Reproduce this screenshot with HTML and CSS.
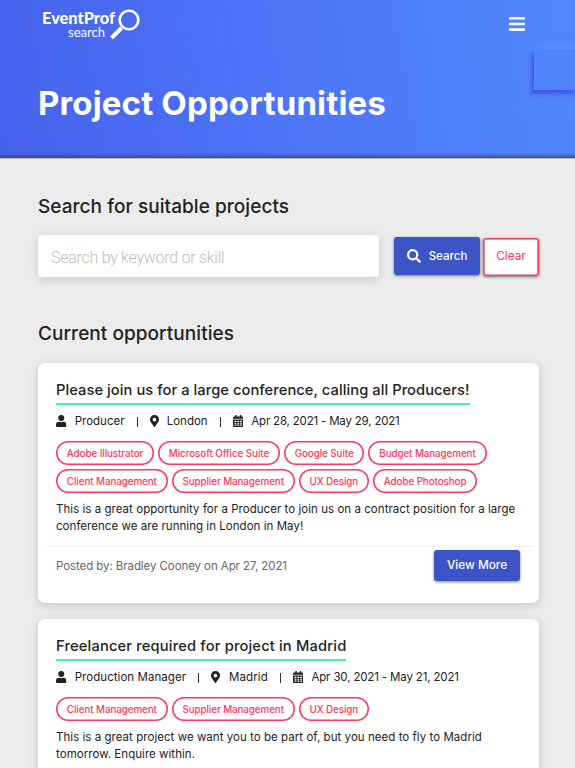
FILE: index.html
```html
<!DOCTYPE html>
<html lang="en">
<head>
<meta charset="utf-8">
<title>Project Opportunities</title>
<link rel="stylesheet" href="styles.css">
</head>
<body>
<svg class="defs" aria-hidden="true">
  <symbol id="user" viewBox="0 0 448 512"><path d="M224 256a128 128 0 1 0 0-256 128 128 0 0 0 0 256zm90 32h-17a174 174 0 0 1-146 0h-17A134 134 0 0 0 0 422v42a48 48 0 0 0 48 48h352a48 48 0 0 0 48-48v-42a134 134 0 0 0-134-134z"/></symbol>
  <symbol id="pin" viewBox="0 0 384 512"><path d="M172 502C27 291 0 270 0 192a192 192 0 0 1 384 0c0 78-27 99-172 310a24 24 0 0 1-40 0zm20-230a80 80 0 1 0 0-160 80 80 0 0 0 0 160z"/></symbol>
  <symbol id="calendar" viewBox="0 0 448 512"><path fill-rule="evenodd" d="M0 464a48 48 0 0 0 48 48h352a48 48 0 0 0 48-48V192H0zM64 240h80v64H64zm120 0h80v64h-80zm120 0h80v64h-80zM64 336h80v32H64zm120 0h80v32h-80zm120 0h80v32h-80zM64 400h80v60H64zm120 0h80v60h-80zm120 0h80v60h-80zM400 64h-48V12a12 12 0 0 0-12-12h-40a12 12 0 0 0-12 12v52H160V12a12 12 0 0 0-12-12h-40a12 12 0 0 0-12 12v52H48a48 48 0 0 0-48 48v48h448v-48a48 48 0 0 0-48-48z"/></symbol>
</svg>
<header class="hero">
  <div class="bar">
    <svg class="logo" viewBox="0 0 98 32">
      <text class="logo-name" x="0" y="15.500" textLength="73" lengthAdjust="spacingAndGlyphs">EventProf</text>
      <text class="logo-sub" x="26" y="29" textLength="37">search</text>
      <path class="handle" d="M79.500 20L69.500 30"/>
      <circle class="lens" cx="87" cy="12" r="9.300"/>
    </svg>
    <svg class="burger" viewBox="0 0 16 14"><path d="M0 0h16v2.600H0zM0 5.800h16v2.400H0zM0 11.300h16v2.600H0z"/></svg>
  </div>
  <h1>Project Opportunities</h1>
  <div class="square"></div>
</header>
<main>
  <h2 class="h-search">Search for suitable projects</h2>
  <form class="search">
    <div class="field">Search by keyword or skill</div>
    <button type="button" class="btn btn-search"><svg viewBox="0 0 512 512"><path d="M505 443L405 343c-4-5-10-7-17-7h-16a208 208 0 1 0-36 36v16c0 7 2 13 7 17l100 100c9 9 24 9 34 0l28-28c9-10 9-25 0-34zM208 336a128 128 0 1 1 0-256 128 128 0 0 1 0 256z"/></svg><span>Search</span></button>
    <button type="button" class="btn btn-clear">Clear</button>
  </form>
  <h2 class="h-current">Current opportunities</h2>
  <article class="card">
    <h3><span>Please join us for a large conference, calling all Producers!</span></h3>
    <div class="meta"><svg class="i-user"><use href="#user"/></svg><span class="role">Producer</span><i></i><svg class="i-pin"><use href="#pin"/></svg><span class="place">London</span><i></i><svg class="i-cal"><use href="#calendar"/></svg><span class="date">Apr 28, 2021 - May 29, 2021</span></div>
    <div class="tags"><span>Adobe Illustrator</span><span>Microsoft Office Suite</span><span>Google Suite</span><span>Budget Management</span><span>Client Management</span><span>Supplier Management</span><span>UX Design</span><span>Adobe Photoshop</span></div>
    <p>This is a great opportunity for a Producer to join us on a contract position for a large<br>conference we are running in London in May!</p>
    <footer><span class="posted">Posted by: Bradley Cooney on Apr 27, 2021</span><button type="button" class="btn btn-view">View More</button></footer>
  </article>
  <article class="card">
    <h3><span class="loose">Freelancer required for project in Madrid</span></h3>
    <div class="meta loose"><svg class="i-user"><use href="#user"/></svg><span class="role">Production Manager</span><i></i><svg class="i-pin"><use href="#pin"/></svg><span class="place">Madrid</span><i></i><svg class="i-cal"><use href="#calendar"/></svg><span class="date">Apr 30, 2021 - May 21, 2021</span></div>
    <div class="tags"><span>Client Management</span><span>Supplier Management</span><span>UX Design</span></div>
    <p>This is a great project we want you to be part of, but you need to fly to Madrid<br>tomorrow. Enquire within.</p>
  </article>
</main>
</body>
</html>
```
FILE: styles.css
```css
* { box-sizing: border-box; }
html { height: 768px; overflow: hidden; }
body { margin: 0; height: 768px; overflow: hidden; background: #ececec; color: #222; font-family: Inter, "Open Sans", sans-serif; }
.defs { display: none; }
h1, h2, h3, p { margin: 0; }
.hero { position: relative; height: 159px; padding: 0 38px; overflow: hidden; background: linear-gradient(0deg, rgba(58,66,100,.9), rgba(58,70,130,.25) 3px, transparent 6px), linear-gradient(80deg, #4661ec, #4d76f7 52%, #5188fb); border-bottom: 1px solid #b9bdcc; }
.bar { height: 48px; display: flex; align-items: center; justify-content: space-between; padding: 0 12px 0 4px; }
.logo { width: 98px; height: 32px; margin-top: -1px; overflow: visible; }
.logo text { fill: #fff; font-family: Lato, sans-serif; }
.logo-name { font-size: 17px; font-weight: 900; }
.logo-sub { font-size: 13px; }
.handle { stroke: #fff; stroke-width: 4; fill: none; }
.lens { stroke: #fff; stroke-width: 2.6; fill: none; }
.burger { width: 16px; height: 14px; fill: #fff; }
h1 { margin-top: 34px; font-size: 33px; line-height: 42px; letter-spacing: .15px; font-weight: 700; color: #fff; white-space: nowrap; }
.square { position: absolute; left: 534px; top: 50px; width: 44px; height: 40px; background: #5084fa; box-shadow: -3px 4px 4px #4458e6, 3px -5px 8px #5791ff; }
main { padding: 0 36px 0 38px; }
h2 { font-size: 19px; line-height: 26px; letter-spacing: .05px; font-weight: 500; white-space: nowrap; }
.h-search { margin-top: 35px; }
.search { display: flex; align-items: flex-start; margin-top: 15px; }
.field { width: 341px; height: 42px; padding-left: 13px; border-radius: 3px; background: #fff; color: #bdbdbd; font-family: Roboto, sans-serif; font-size: 16px; letter-spacing: -.27px; font-weight: 300; line-height: 45px; box-shadow: 0 2px 10px rgba(0,0,0,.16); }
.btn { border: 0; padding: 0; font: 500 11.8px/1 Inter, sans-serif; border-radius: 3px; display: flex; align-items: center; justify-content: center; color: #fff; background: #3d54c6; box-shadow: 0 1px 3px rgba(0,0,0,.5); }
.btn-search { margin: 2px 0 0 15px; width: 86px; height: 38px; gap: 8px; padding-top: 2px; font-size: 11.5px; }
.btn-search svg { width: 14px; height: 14px; margin-top: -3px; fill: #fff; }
.btn-clear { margin: 3px 0 0 3px; width: 56px; height: 38px; padding-bottom: 1px; background: #fff; color: #fc3a5e; font-weight: 400; box-shadow: inset 0 0 0 1.600px #fc3a5e, 0 1px 3px rgba(0,0,0,.5); }
.h-current { margin-top: 44px; }
.card { height: 240px; margin-top: 16px; padding: 17px 7px 0; border-radius: 7px; background: #fff; box-shadow: 0 2px 10px rgba(0,0,0,.18); }
h3 { padding-left: 11px; height: 25px; font-size: 14.700px; letter-spacing: .06px; font-weight: 500; line-height: 20px; white-space: nowrap; }
h3 span { display: inline-block; height: 25px; border-bottom: 2px solid #46ebcb; }
h3 .loose { letter-spacing: .16px; }
.meta { display: flex; align-items: center; height: 17px; margin: 7px 0 0 11px; font-size: 11.500px; white-space: nowrap; }
.meta svg { height: 12px; fill: #222; flex: none; }
.i-user { width: 10.500px; }
.i-pin { width: 9px; }
.i-cal { width: 10.500px; }
.meta span { margin-left: 8.200px; }
.meta .date { letter-spacing: -.19px; }
.meta i { width: 1px; height: 10px; margin: 2px 12px 0; background: #333; }
.loose .role { letter-spacing: .05px; }
.loose .place { margin-left: 9px; letter-spacing: .08px; }
.loose .date { letter-spacing: -.15px; }
.tags { display: flex; flex-wrap: wrap; gap: 4px; margin: 12px 30px 0 11px; }
.tags span { height: 24px; padding: 0 10.800px; border-radius: 12px; color: #fc3a5e; font-size: 9.800px; letter-spacing: -.07px; line-height: 25px; font-weight: 500; box-shadow: inset 0 0 0 1.500px #fc3a5e; }
p { margin: 8px 0 0 11px; font-size: 11.500px; letter-spacing: .04px; line-height: 17px; white-space: nowrap; }
footer { display: flex; justify-content: space-between; margin-top: 11px; padding: 3px 12px 0 11px; border-top: 1px solid #eee; }
.posted { font-size: 11.500px; letter-spacing: -.08px; line-height: 32px; color: #666; white-space: nowrap; }
.btn-view { width: 86px; height: 31px; }
```
